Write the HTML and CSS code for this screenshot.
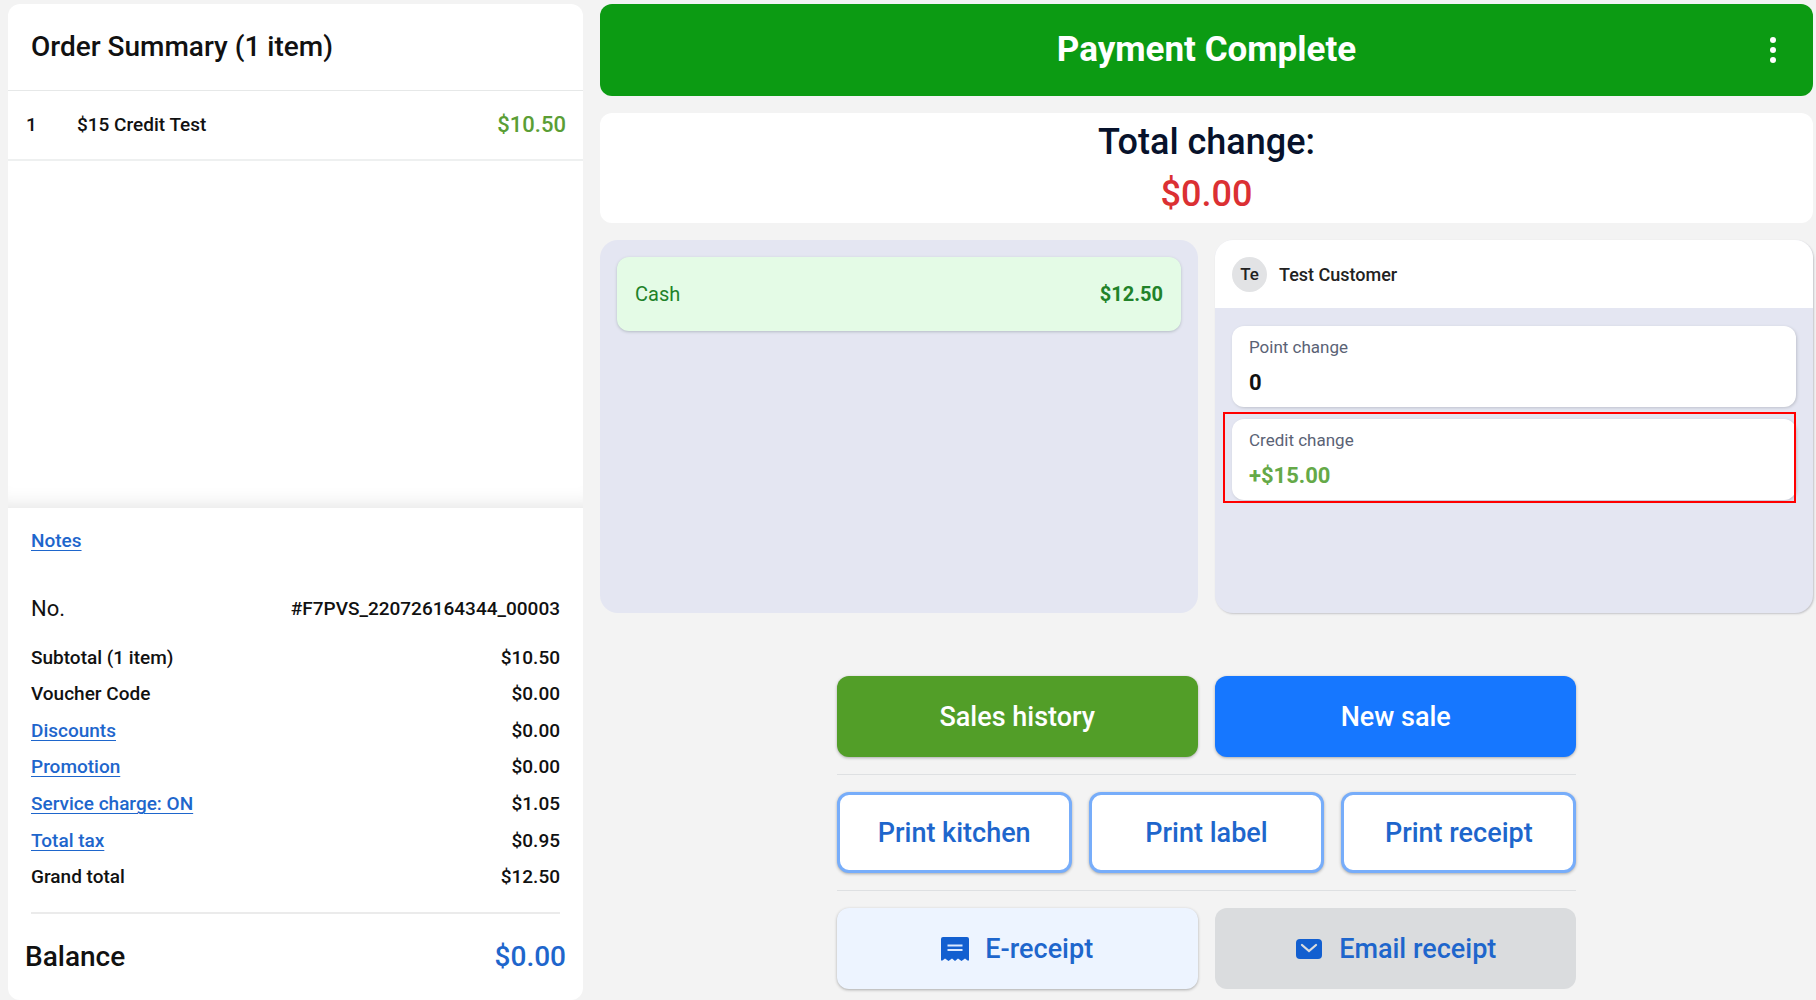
FILE: index.html
```
<!DOCTYPE html>
<html lang="en">
<head>
	<meta charset="utf-8">
	<title>Payment Complete</title>
	<link rel="stylesheet" href="styles.css">
</head>

<body>
	<aside class="order">
		<h1>Order Summary (1 item)</h1>
		<ul class="items">
			<li>
				<span class="qty">1</span>
				<span class="name">$15 Credit Test</span>
				<span class="price">$10.50</span>
			</li>
		</ul>

		<div class="details">
			<a href="#notes">Notes</a>
			<div class="number"><span>No.</span><b>#F7PVS_220726164344_00003</b></div>
			<table class="totals">
				<tr><th>Subtotal (1 item)</th><td>$10.50</td></tr>
				<tr><th>Voucher Code</th><td>$0.00</td></tr>
				<tr><th><a href="#discounts">Discounts</a></th><td>$0.00</td></tr>
				<tr><th><a href="#promotion">Promotion</a></th><td>$0.00</td></tr>
				<tr><th><a href="#service">Service charge: ON</a></th><td>$1.05</td></tr>
				<tr><th><a href="#tax">Total tax</a></th><td>$0.95</td></tr>
				<tr><th>Grand total</th><td>$12.50</td></tr>
			</table>
		</div>
		<div class="balance"><span>Balance</span><span class="amount">$0.00</span></div>
	</aside>

	<main>
		<header>
			<h2>Payment Complete</h2>
			<button class="more" aria-label="More options">
				<svg width="8" height="28" viewBox="0 0 8 28" fill="#fff">
					<circle cx="4" cy="4" r="3"/><circle cx="4" cy="14" r="3"/><circle cx="4" cy="24" r="3"/>
				</svg>
			</button>
		</header>

		<section class="change">
			<div>Total change:</div>
			<div class="due">$0.00</div>
		</section>

		<div class="panels">
			<section class="panel payments">
				<div class="payment"><span>Cash</span><b>$12.50</b></div>
			</section>
			<section class="panel customer">
				<div class="who"><span class="avatar">Te</span>Test Customer</div>
				<div class="cards">
					<div class="card">
						<div class="label">Point change</div>
						<div class="value">0</div>
					</div>
					<div class="card marked">
						<div class="label">Credit change</div>
						<div class="value plus">+$15.00</div>
					</div>
				</div>
			</section>
		</div>

		<div class="actions">
			<div class="row">
				<button class="history">Sales history</button>
				<button class="sale">New sale</button>
			</div>
			<hr>
			<div class="row">
				<button class="print">Print kitchen</button>
				<button class="print">Print label</button>
				<button class="print">Print receipt</button>
			</div>
			<hr>
			<div class="row">
				<button class="ereceipt">
					<svg width="28" height="24" viewBox="0 0 28 24">
						<path fill="#125fd0" d="M2 0h24q2 0 2 2v21.500h-1.500l-2.500-2-3.500 2.500-3.500-2.500-3 2.500-3-2.500-3.500 2.500-3.500-2.500-2.500 2H0V2q0-2 2-2z"/>
						<path stroke="#dbe9ff" stroke-width="2.200" d="M6.500 8.500h15M6.500 13h15"/>
					</svg>
					E-receipt
				</button>
				<button class="email">
					<svg width="28" height="22" viewBox="0 0 28 22">
						<rect x="1" y="1" width="26" height="20" rx="4" fill="#125fd0"/>
						<path fill="none" stroke="#dadcde" stroke-width="2.300" stroke-linecap="round" d="M7 7l7 6 7-6"/>
					</svg>
					Email receipt
				</button>
			</div>
		</div>
	</main>
</body>
</html>
```
FILE: styles.css
```
* {box-sizing:border-box;}
body {margin:0; min-height:100vh; padding:4px 3px 0 8px; background:#f3f3f3;
	display:grid; grid-template-columns:575fr 1213fr; gap:17px;
	font-family:Roboto, Arial, sans-serif; font-weight:500; color:#111;}
h1, h2, ul {margin:0; padding:0;}
b {font-weight:500;}
a {color:#1e66cc; text-underline-offset:3px; text-decoration-thickness:1px;}
button {border:0; font:inherit; cursor:pointer;}

/* order summary */
.order {display:flex; flex-direction:column; background:#fff;
	border-radius:12px;}
h1 {padding:0 23px; font-size:28px; font-weight:500; line-height:86px;
	border-bottom:1px solid #e6e8e8;}
.items {flex:1; list-style:none; box-shadow:inset 0 -22px 22px -22px #ddd;}
.items li {display:flex; padding:0 17px; line-height:68px; font-size:19px;
	border-bottom:2px solid #eef0f0;}
.qty {width:52px; padding-left:1px;}
.name {flex:1;}
.price {font-size:22px; color:#5a9e35;}
.details {margin:0 23px; padding-top:22px; font-size:19px;
	border-bottom:2px solid #ebebeb;}
.details > a {display:block; width:fit-content; line-height:22px;}
.number {display:flex; justify-content:space-between; margin-top:37px;
	line-height:40px;}
.number span {font-size:22px; font-weight:400;}
.totals {width:100%; height:256px; margin:10px 0 17px;
	border-collapse:collapse; color:#111;}
.totals th, .totals td {padding:0; font-weight:500; text-align:left;}
.totals td {text-align:right;}
.balance {display:flex; justify-content:space-between; padding:0 17px;
	line-height:86px; font-size:28px;}
.amount {color:#1e66cc;}

/* payment result */
main {display:flex; flex-direction:column;}
header {position:relative; height:92px; border-radius:12px;
	background:#0c9b13; color:#fff; text-align:center;}
h2 {font-size:35px; font-weight:700; line-height:92px;}
.more {position:absolute; top:26px; right:28px; padding:6px 8px;
	background:none;}
.more svg {display:block;}
.change {margin:17px 0; padding:3px 0; border-radius:12px;
	background:#fff; text-align:center; font-size:36px; line-height:52px;
	color:#07122b;}
.due {color:#db3033;}
.panels {flex:1; display:grid; grid-template-columns:1fr 1fr; gap:17px;}
.panel {border-radius:18px; background:#e4e6f2;}
.payments {padding:17px;}
.payment {display:flex; justify-content:space-between; padding:0 18px;
	border-radius:12px; background:#e4fbe6; color:#218229;
	line-height:74px; font-size:20px; box-shadow:0 1px 3px #b4bcc4;}
.payment span {font-weight:400;}
.payment b {font-weight:700;}
.customer {overflow:hidden; box-shadow:1px 1px 2px #c4c4c8;}
.who {display:flex; align-items:center; gap:12px; height:68px;
	padding:0 17px; background:#fff; font-size:18px; color:#222;}
.avatar {width:35px; border-radius:50%; background:#e2e3e5;
	text-align:center; font-size:17px; line-height:35px;}
.cards {display:grid; gap:12px; padding:18px 17px;}
.card {position:relative; padding:8px 17px 6px; border-radius:12px;
	background:#fff; box-shadow:1px 1px 3px #bfc2cc;}
.label {margin-bottom:3px; font-size:17px; font-weight:400;
	line-height:27px; color:#5a6275;}
.value {font-size:22px; font-weight:700; line-height:37px;}
.plus {color:#65a948;}
.marked::after {content:""; position:absolute; inset:-7px 0 -3px -9px;
	border:2px solid #f00;}

/* buttons */
.actions {width:61%; margin:63px auto 11px;}
.row {display:flex; gap:17px;}
.row button {flex:1; display:flex; align-items:center;
	justify-content:center; gap:16px; height:81px; border-radius:12px;
	font-size:27px; color:#1e66cc; box-shadow:0 1px 3px #aaa;}
.row .history {background:#529e28; color:#fff;}
.row .sale {background:#1677ff; color:#fff;}
.row .print {background:#fff; border:3px solid #77adfa;}
.row .ereceipt {background:#edf4ff;}
.row .email {background:#dadcde; box-shadow:none;}
hr {margin:17px 0; border:0; border-top:1px solid #dee0e2;}
```
